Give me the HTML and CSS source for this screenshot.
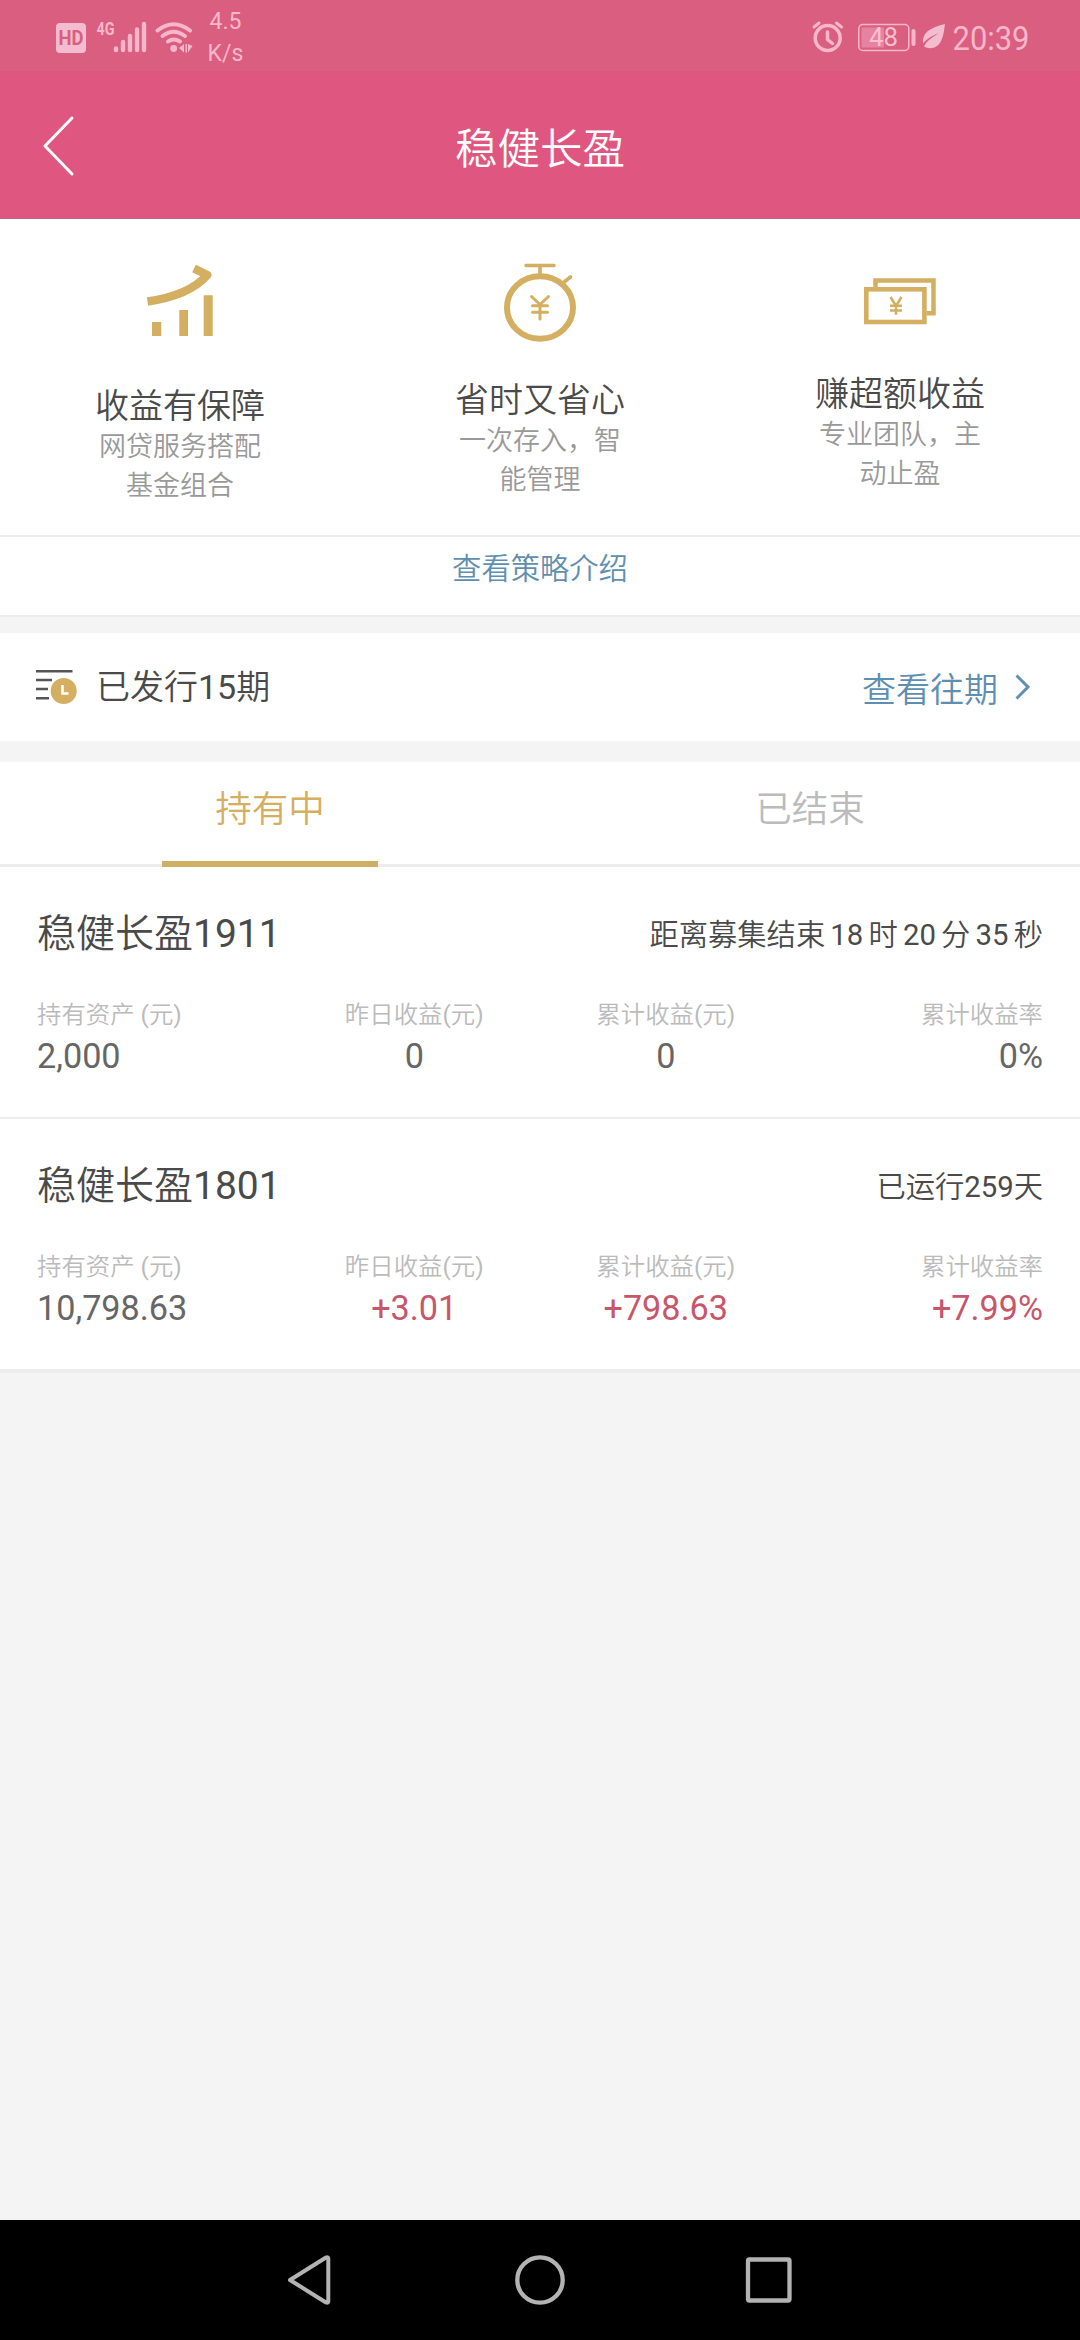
FILE: index.html
```html
<!DOCTYPE html>
<html lang="zh-CN">
<head>
<meta charset="utf-8">
<title>稳健长盈</title>
<link rel="stylesheet" href="styles.css">
</head>
<body>
<header class="header">
  <div class="status">
    <svg class="status-icons" width="150" height="70" viewBox="50 0 150 70">
      <rect x="56" y="23" width="30" height="30" rx="4" fill="#f4bdcf"/>
      <text x="58.5" y="44.5" font-size="19.5" font-weight="700" textLength="25" lengthAdjust="spacingAndGlyphs" fill="#d95e80">HD</text>
      <text x="96.5" y="35.3" font-size="18.5" font-weight="700" textLength="18" lengthAdjust="spacingAndGlyphs" fill="#f8b6cb">4G</text>
      <g stroke="#f8b6cb" stroke-width="4.4" stroke-linecap="round">
        <path d="M116 48.5v1.5M123 42v8M130 36v14M137 29.500v20.500M144 24v26"/>
      </g>
      <g fill="none" stroke="#f8b6cb" stroke-width="4" stroke-linecap="round">
        <path d="M157.500 30.500Q173.500 18 190 30.500M162.500 36Q173.500 27.500 185 36M168 41.500Q173.500 37.500 180 41.500"/>
      </g>
      <circle cx="173.700" cy="48.500" r="3.400" fill="#f8b6cb"/>
      <path d="M184 44v8.500l-5-4.500zM185.500 44h1.500v8.500h-1.500zM188 44l4.500 2-4.500 6.500z" fill="#f8b6cb"/>
    </svg>
    <div class="speed"><span>4.5</span><span>K/s</span></div>
    <svg class="status-right" width="260" height="70" viewBox="800 0 260 70">
      <g fill="none" stroke="#f8b6cb" stroke-linecap="round" stroke-linejoin="round">
        <circle cx="827.700" cy="38" r="12.500" stroke-width="3.500"/>
        <path d="M827.500 32v7.500l5 4" stroke-width="3.500"/>
        <path d="M814 27l5-4M841.500 27l-5-4" stroke-width="3"/>
        <rect x="858.800" y="24.500" width="50" height="26" rx="4" stroke-width="1.500"/>
        <path d="M913.500 31v13" stroke-width="4"/>
      </g>
      <rect x="861.500" y="27.500" width="22.500" height="20" fill="#e583a1"/>
      <text x="869" y="45.700" font-size="26" textLength="29" lengthAdjust="spacingAndGlyphs" fill="#f8bfd0">48</text>
      <path d="M945 24C929 28 922 33 923 43.500C930 36 933 36 939 33C932 38 927 40 924 46.500C930 50 938 48 941 41C944 35 944 30 945 24z" fill="#f4bdcf"/>
      <text x="952.500" y="50" font-size="34" textLength="77" lengthAdjust="spacingAndGlyphs" fill="#f8b6cb">20:39</text>
    </svg>
  </div>
  <div class="titlebar">
    <svg class="back" width="36" height="64" viewBox="0 0 36 64"><path d="M32 4L5 32L32 60" fill="none" stroke="#fff" stroke-width="3" stroke-linecap="round" stroke-linejoin="round"/></svg>
    <h1 class="title">稳健长盈</h1>
  </div>
</header>

<main>
  <section class="features">
    <article class="feature">
      <svg width="80" height="167" viewBox="0 0 80 167">
        <path d="M7.500 82.500C32 79 54 71 67.300 56L54 49.500" fill="none" stroke="#d4af62" stroke-width="8.500" stroke-linejoin="round"/>
        <path d="M12 103h9.300v14H12zM39.300 91H48v26h-8.700zM63.700 76.300h9V117h-9z" fill="#d4af62"/>
      </svg>
      <h2 class="feature-name">收益有保障</h2>
      <p class="feature-text">网贷服务搭配<br>基金组合</p>
    </article>
    <article class="feature">
      <svg width="80" height="161" viewBox="0 0 80 161">
        <g fill="none" stroke="#d4af62" stroke-linecap="round">
          <ellipse cx="40" cy="88.500" rx="33" ry="31.200" stroke-width="6"/>
          <path d="M26 46.500h28M40 47v9M63.500 63.500l7-5.500" stroke-width="3.600"/>
          <path d="M31.500 77.500L40 85.500L48.500 77.500M40 85.500V100M32.500 86.800h15M32.500 93.300h15" stroke-width="3"/>
        </g>
      </svg>
      <h2 class="feature-name">省时又省心</h2>
      <p class="feature-text">一次存入，智<br>能管理</p>
    </article>
    <article class="feature">
      <svg width="80" height="155" viewBox="0 0 80 155">
        <g fill="none" stroke="#d4af62">
          <rect x="6.300" y="70.300" width="58.100" height="32.700" stroke-width="4.600"/>
          <path d="M15.500 68v-6.500h58v32.700h-7" stroke-width="4.500"/>
          <path d="M30.500 78L36 87L41.500 78M36 87v8.700M30 86.800h12M30 91.500h12" stroke-width="2.600"/>
        </g>
      </svg>
      <h2 class="feature-name">赚超额收益</h2>
      <p class="feature-text">专业团队，主<br>动止盈</p>
    </article>
  </section>
  <a class="strategy">查看策略介绍</a>

  <section class="issued">
    <svg class="issued-icon" width="42" height="36" viewBox="0 0 42 36">
      <path d="M0 2.200h36.500M0 11h16M0 20h12M0 29.200h13" stroke="#555" stroke-width="2.400"/>
      <circle cx="27.700" cy="22" r="13" fill="#d4af62"/>
      <path d="M26.500 16v8.500h6" fill="none" stroke="#fff" stroke-width="2.600"/>
    </svg>
    <span class="issued-label">已发行15期</span>
    <a class="issued-link">查看往期</a>
    <svg class="chevron" width="18" height="28" viewBox="0 0 18 28"><path d="M2.500 2.500L14 14L2.500 25.500" fill="none" stroke="#5f8fb0" stroke-width="3"/></svg>
  </section>

  <nav class="tabs">
    <div class="tab tab-active"><span class="tab-text">持有中</span></div>
    <div class="tab"><span class="tab-text">已结束</span></div>
  </nav>

  <section class="card">
    <div class="card-head">
      <h3 class="card-name">稳健长盈1911</h3>
      <p class="card-state countdown"><span>距离募集结束</span><span>18</span><span>时</span><span>20</span><span>分</span><span>35</span><span>秒</span></p>
    </div>
    <dl class="stats">
      <div class="stat"><dt>持有资产 (元)</dt><dd>2,000</dd></div>
      <div class="stat"><dt>昨日收益(元)</dt><dd>0</dd></div>
      <div class="stat"><dt>累计收益(元)</dt><dd>0</dd></div>
      <div class="stat"><dt>累计收益率</dt><dd>0%</dd></div>
    </dl>
  </section>
  <section class="card card-last">
    <div class="card-head">
      <h3 class="card-name">稳健长盈1801</h3>
      <p class="card-state">已运行259天</p>
    </div>
    <dl class="stats">
      <div class="stat"><dt>持有资产 (元)</dt><dd>10,798.63</dd></div>
      <div class="stat"><dt>昨日收益(元)</dt><dd class="gain">+3.01</dd></div>
      <div class="stat"><dt>累计收益(元)</dt><dd class="gain">+798.63</dd></div>
      <div class="stat"><dt>累计收益率</dt><dd class="gain">+7.99%</dd></div>
    </dl>
  </section>
</main>

<footer class="navbar">
  <svg width="60" height="60" viewBox="0 0 60 60"><path d="M9 30L45 7.500Q47.300 6.500 47.300 9V51Q47.300 53.500 45 52.500Z" fill="none" stroke="#b3b3b3" stroke-width="4" stroke-linejoin="round"/></svg>
  <svg width="60" height="60" viewBox="0 0 60 60"><circle cx="30" cy="30" r="22.700" fill="none" stroke="#b3b3b3" stroke-width="4.300"/></svg>
  <svg width="60" height="60" viewBox="0 0 60 60"><rect x="9" y="9.500" width="41.500" height="41" rx="1.500" fill="none" stroke="#b3b3b3" stroke-width="4.300"/></svg>
</footer>
</body>
</html>
```
FILE: styles.css
```css
* { box-sizing: border-box; margin: 0; padding: 0; }
body {
  width: 1080px;
  height: 2340px;
  display: flex;
  flex-direction: column;
  background: #f4f4f4;
  color: #4a4a4a;
  font-family: Roboto, "Noto Sans CJK SC DemiLight", "Noto Sans CJK SC Light", "Noto Sans CJK SC", sans-serif;
  font-weight: 400;
}
h1, h2, h3 { font-weight: 400; }
svg { display: block; flex: none; }
main { flex: 1; }

.header { height: 219px; background: #df5780; border-bottom: 1px solid #b96b84; }
.status { display: flex; height: 71px; padding-left: 50px; background: #d95e80; }
.speed {
  display: flex;
  flex-direction: column;
  width: 51px;
  padding-top: 6px;
  text-align: center;
  font-size: 23px;
  line-height: 32px;
  color: #f8b6cb;
}
.status-right { margin-left: auto; margin-right: 20px; }
.titlebar { display: flex; align-items: center; height: 147px; padding: 3px 40px 0; }
.back { width: 36px; }
.title { flex: 1; padding: 8px 36px 0 0; text-align: center; font-size: 42.500px; line-height: 60px; color: #fff; }

.features { display: grid; grid-template-columns: repeat(3, 1fr); height: 316px; background: #fff; }
.feature { display: flex; flex-direction: column; align-items: center; }
.feature-name { font-size: 34px; line-height: 40px; }
.feature-text { padding-top: 2px; font-size: 27px; line-height: 39px; text-align: center; color: #999; }
.strategy {
  display: block;
  height: 82px;
  padding-top: 8px;
  border-top: 2px solid #ededed;
  border-bottom: 2px solid #ededed;
  background: #fff;
  text-align: center;
  font-size: 29.300px;
  line-height: 48px;
  color: #5f8fb0;
}

.issued { display: flex; align-items: center; height: 108px; margin-top: 16px; padding: 0 48px 0 36px; background: #fff; font-size: 34px; line-height: 48px; }
.issued-label { margin-left: 18px; }
.issued-link { margin-left: auto; padding-top: 6px; color: #5f8fb0; }
.chevron { margin-left: 16px; }

.tabs { display: grid; grid-template-columns: 1fr 1fr; height: 105px; margin-top: 21px; background: #fff; border-bottom: 3px solid #ededed; }
.tab { display: flex; justify-content: center; color: #bbb; font-size: 36.600px; line-height: 96px; height: 105px; }
.tab-text { width: 216px; text-align: center; }
.tab-active { color: #d4af62; }
.tab-active .tab-text { border-bottom: 6px solid #d0ae62; }

.card { height: 252px; padding: 42px 37px 0; background: #fff; border-bottom: 2px solid #ededed; }
.card-last { height: 254px; border-bottom-width: 4px; }
.card-head { display: flex; justify-content: space-between; height: 50px; line-height: 50px; }
.card-name { font-size: 39px; }
.card-state { padding-top: 1px; font-size: 29.300px; }
.countdown { display: flex; gap: 5.200px; }
.stats { display: grid; grid-template-columns: repeat(4, 1fr); margin-top: 37px; text-align: center; }
.stat:first-child { text-align: left; }
.stat:last-child { text-align: right; }
.stat dt { font-size: 24.400px; line-height: 38px; color: #bbb; }
.stat dd { font-size: 34.200px; line-height: 44px; color: #666; }
.stat .gain { color: #c8566a; }

.navbar { display: flex; justify-content: center; align-items: center; gap: 169px; height: 120px; background: #000; }
```
